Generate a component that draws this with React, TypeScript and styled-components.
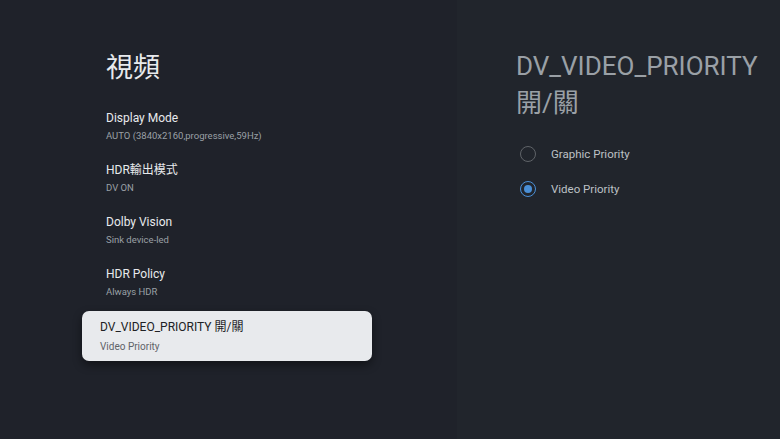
import React from "react";
import styled, { createGlobalStyle } from "styled-components";

const Global = createGlobalStyle`
  html, body { margin: 0; padding: 0; background: #1f2229; }
  body { font-family: Roboto, "Noto Sans CJK TC", sans-serif; -webkit-font-smoothing: antialiased; }
`;

const Screen = styled.div`
  display: flex;
  width: 780px;
  height: 439px;
  overflow: hidden;
  background: #1f222a;
`;

const LeftPanel = styled.div`
  width: 457px;
  padding: 48px 0 0 106px;
  box-sizing: border-box;
  display: flex;
  flex-direction: column;
`;

const RightPanel = styled.div`
  flex: 1;
  background: #21252c;
  padding: 48px 0 0 59px;
  box-sizing: border-box;
  display: flex;
  flex-direction: column;
`;

const PageTitle = styled.h1`
  margin: 0 0 17px 0;
  font-family: "Noto Sans CJK TC", Roboto, sans-serif;
  font-weight: 400;
  font-size: 27px;
  line-height: 36px;
  color: #e8eaed;
`;

const List = styled.div`
  display: flex;
  flex-direction: column;
`;

const Item = styled.div<{ $focused?: boolean }>`
  display: flex;
  flex-direction: column;
  gap: ${(p) => (p.$focused ? "5px" : "3px")};
  padding: ${(p) => (p.$focused ? "8px 18px 7px 18px" : "9px 0 10px 0")};
  margin-left: ${(p) => (p.$focused ? "-24px" : "0")};
  margin-top: ${(p) => (p.$focused ? "2px" : "0")};
  width: ${(p) => (p.$focused ? "290px" : "auto")};
  box-sizing: border-box;
  border-radius: 7px;
  background: ${(p) => (p.$focused ? "#e8eaed" : "transparent")};
  box-shadow: ${(p) => (p.$focused ? "0 4px 10px rgba(0,0,0,0.45)" : "none")};
`;

const ItemTitle = styled.div<{ $focused?: boolean }>`
  font-size: 12px;
  line-height: 16px;
  color: ${(p) => (p.$focused ? "#202124" : "#e8eaed")};
  white-space: nowrap;
`;

const ItemSub = styled.div<{ $focused?: boolean }>`
  font-size: ${(p) => (p.$focused ? "10px" : "9.5px")};
  line-height: 14px;
  color: ${(p) => (p.$focused ? "#5f6368" : "#9aa0a6")};
  white-space: nowrap;
`;

const DetailTitle = styled.h2`
  margin: 0 0 22px 0;
  font-weight: 400;
  font-size: 26px;
  line-height: 37px;
  color: #9aa0a6;
`;

const Options = styled.div`
  display: flex;
  flex-direction: column;
  gap: 15px;
`;

const Option = styled.div`
  display: flex;
  align-items: center;
  gap: 15px;
  height: 20px;
  padding-left: 4px;
`;

const Radio = styled.span<{ $checked?: boolean }>`
  width: 16px;
  height: 16px;
  box-sizing: border-box;
  border-radius: 50%;
  border: 1.5px solid ${(p) => (p.$checked ? "#4a8fd6" : "#5f6368")};
  display: flex;
  align-items: center;
  justify-content: center;
  &::after {
    content: "";
    display: ${(p) => (p.$checked ? "block" : "none")};
    width: 8px;
    height: 8px;
    border-radius: 50%;
    background: #4a8fd6;
  }
`;

const OptionLabel = styled.span`
  font-size: 11.5px;
  color: #bdc1c6;
`;

const items = [
  { title: "Display Mode", sub: "AUTO (3840x2160,progressive,59Hz)" },
  { title: "HDR輸出模式", sub: "DV ON" },
  { title: "Dolby Vision", sub: "Sink device-led" },
  { title: "HDR Policy", sub: "Always HDR" },
];

export default function App() {
  return (
    <>
      <Global />
      <Screen>
        <LeftPanel>
          <PageTitle>視頻</PageTitle>
          <List>
            {items.map((it) => (
              <Item key={it.title}>
                <ItemTitle>{it.title}</ItemTitle>
                <ItemSub>{it.sub}</ItemSub>
              </Item>
            ))}
            <Item $focused>
              <ItemTitle $focused>DV_VIDEO_PRIORITY 開/關</ItemTitle>
              <ItemSub $focused>Video Priority</ItemSub>
            </Item>
          </List>
        </LeftPanel>
        <RightPanel>
          <DetailTitle>
            DV_VIDEO_PRIORITY
            <br />
            開/關
          </DetailTitle>
          <Options>
            <Option>
              <Radio />
              <OptionLabel>Graphic Priority</OptionLabel>
            </Option>
            <Option>
              <Radio $checked />
              <OptionLabel>Video Priority</OptionLabel>
            </Option>
          </Options>
        </RightPanel>
      </Screen>
    </>
  );
}
